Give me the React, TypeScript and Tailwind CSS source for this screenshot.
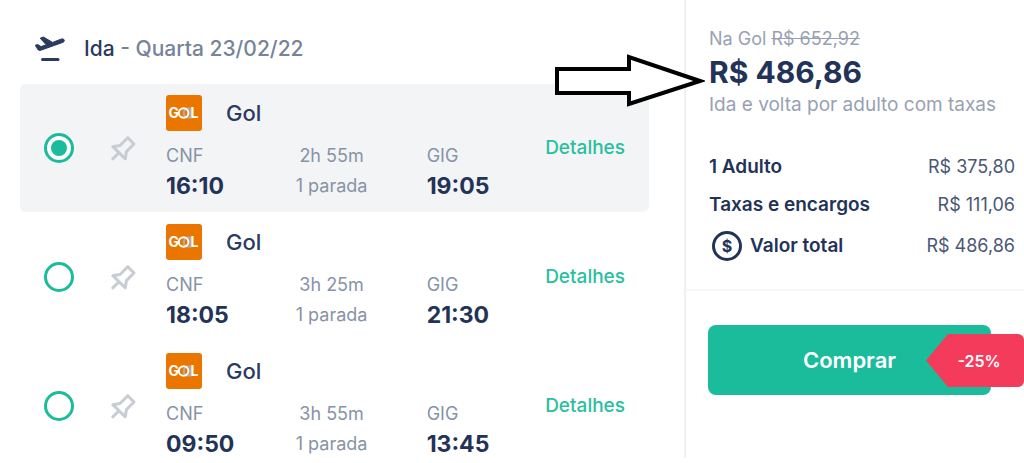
import React, { useState } from 'react';

interface Flight {
  id: string;
  departure: string;
  arrival: string;
  duration: string;
}

const flights: Flight[] = [
  { id: 'g1', departure: '16:10', arrival: '19:05', duration: '2h 55m' },
  { id: 'g2', departure: '18:05', arrival: '21:30', duration: '3h 25m' },
  { id: 'g3', departure: '09:50', arrival: '13:45', duration: '3h 55m' },
];

const TakeoffIcon = () => (
  <svg className="w-8 h-7 shrink-0" viewBox="0 0 32 28" fill="none" aria-hidden="true">
    <path
      d="M1.3 10.2 3.6 9.5 7 11.6 12.2 9.8 6.2 3.2 9.4 2 18.6 7.4 26.8 4.2C28.6 3.6 30 4 30.3 5.2 30.5 6.3 29.8 7 28.5 7.5L6.6 15.3C5.4 15.7 4.6 15.5 3.9 14.6Z"
      fill="#2b3a5f"
      stroke="#2b3a5f"
      strokeWidth="1"
      strokeLinejoin="round"
    />
    <path d="M8.5 24.5H24" stroke="#2b3a5f" strokeWidth="3" strokeLinecap="round" />
  </svg>
);

const PinIcon = () => (
  <svg className="w-[30px] h-[30px]" viewBox="0 0 30 30" fill="none" stroke="#c8cdd5" strokeWidth="3" strokeLinecap="round" strokeLinejoin="round" aria-hidden="true">
    <path d="M19.8 4.7 26 11 18.4 18.6 17.3 25.8 4.8 13.7 12 12.5Z" />
    <path d="M10.3 20.5 4.8 25.8" />
  </svg>
);

const GolLogo = () => (
  <svg className="w-9 h-9 shrink-0" viewBox="0 0 36 36" role="img" aria-label="Gol">
    <rect width="36" height="36" rx="3" fill="#ea7600" />
    <text x="2.6" y="23" fill="#fff" fontFamily="Inter, sans-serif" fontWeight="700" fontSize="14">G</text>
    <path d="M24.5 13.6H21Q17.8 14.6 17.8 18T21 22.6H24.5V14" fill="none" stroke="#b5aca6" strokeWidth="2" />
    <circle cx="17.6" cy="18" r="4.8" fill="none" stroke="#fff" strokeWidth="2" />
    <text x="24.6" y="23" fill="#fff" fontFamily="Inter, sans-serif" fontWeight="700" fontSize="14">L</text>
  </svg>
);

interface FlightRowProps {
  flight: Flight;
  selected: boolean;
  onSelect: (id: string) => void;
}

const FlightRow: React.FC<FlightRowProps> = ({ flight, selected, onSelect }) => {
  return (
    <li
      className={`
        flex items-center h-32 px-6 rounded-md
        ${selected ? 'bg-[#f3f4f6]' : 'bg-white'}
      `}
    >
      <input
        type="radio"
        name="flight"
        aria-label={`Gol ${flight.departure}`}
        checked={selected}
        onChange={() => onSelect(flight.id)}
        className="grid place-items-center shrink-0 w-[30px] h-[30px] appearance-none rounded-full border-[3px] border-[#1bbc9b] bg-white checked:before:content-[''] checked:before:w-4 checked:before:h-4 checked:before:rounded-full checked:before:bg-[#1bbc9b]"
      />
      <button type="button" aria-label="Fixar voo" className="ml-[34px] mr-7 shrink-0">
        <PinIcon />
      </button>

      <div className="flex-1 flex flex-col gap-2.5">
        <div className="flex items-center gap-6 h-9">
          <GolLogo />
          <span className="text-[22px] font-medium text-[#2b3a5f]">Gol</span>
        </div>
        <div className="grid grid-cols-[5fr_6fr_5fr] leading-[30px] text-lg text-[#8793a6]">
          <div>
            <div>CNF</div>
            <div className="text-[23px] leading-[30px] font-bold text-[#233358]">{flight.departure}</div>
          </div>
          <div className="text-center pr-12">
            <div>{flight.duration}</div>
            <div>1 parada</div>
          </div>
          <div>
            <div>GIG</div>
            <div className="text-[23px] leading-[30px] font-bold text-[#233358]">{flight.arrival}</div>
          </div>
        </div>
      </div>

      <a href="#detalhes" className="ml-auto text-[19px] font-medium text-[#2abf9e]">
        Detalhes
      </a>
    </li>
  );
};

const PriceSummary = () => {
  return (
    <aside className="relative self-start w-[340px] shrink-0 border-l-2 border-[#eef1f4]">
      {/* Arrow pointing at the price */}
      <svg className="absolute top-[54px] -left-[133px] w-[152px] h-[54px]" viewBox="0 0 152 54" aria-hidden="true">
        <path d="M4 15H76V3L147 27 76 50V39H4Z" fill="#fff" stroke="#000" strokeWidth="4" />
      </svg>

      <section className="pl-[23px] pr-[9px] pt-6 pb-[21px] border-b-2 border-[#f7f8f9]">
        <p className="text-lg leading-[30px] text-[#98a1b3]">
          Na Gol <s>R$ 652,92</s>
        </p>
        <p className="text-3xl leading-9 font-bold text-[#233358]">R$ 486,86</p>
        <p className="text-[19px] leading-[30px] text-[#98a1b3]">Ida e volta por adulto com taxas</p>

        <dl className="mt-7 text-lg text-[#4a5775]">
          <div className="flex items-center justify-between h-[38px]">
            <dt className="text-[19px] font-semibold text-[#233358]">1 Adulto</dt>
            <dd>R$ 375,80</dd>
          </div>
          <div className="flex items-center justify-between h-[38px]">
            <dt className="text-[19px] font-semibold text-[#233358]">Taxas e encargos</dt>
            <dd>R$ 111,06</dd>
          </div>
          <div className="flex items-center justify-between h-11">
            <dt className="flex items-center gap-2 pl-[3px] text-[19px] font-semibold text-[#233358]">
              <span className="grid place-items-center w-[30px] h-[30px] rounded-full border-[3px] text-base leading-none font-bold" aria-hidden="true">
                $
              </span>
              Valor total
            </dt>
            <dd>R$ 486,86</dd>
          </div>
        </dl>
      </section>

      <div className="pl-[22px] pr-[33px] pt-[34px] pb-[63px]">
        <div className="relative">
          <button type="button" className="w-full h-[70px] rounded-lg bg-[#1bbc9b] text-[22px] font-semibold text-white">
            Comprar
          </button>
          <span className="absolute -right-[33px] top-[9px] flex items-center justify-center w-[98px] h-[53px] pl-2 rounded-md bg-[#f43b5c] text-base font-semibold text-white [clip-path:polygon(22px_0,100%_0,100%_100%,22px_100%,0_50%)]">
            -25%
          </span>
        </div>
      </div>
    </aside>
  );
};

export default function App() {
  const [selectedId, setSelectedId] = useState('g1');

  return (
    <div className="flex bg-white font-['Inter',sans-serif]">
      <main className="flex-1 min-w-0 pl-5 pr-[35px] pt-[34px]">
        <h2 className="flex items-center gap-[18px] pl-[14px] h-[30px] mb-5 text-[21px] font-medium text-[#76839a]">
          <TakeoffIcon />
          <span>
            <span className="text-[#2b3a5f]">Ida</span> - Quarta 23/02/22
          </span>
        </h2>
        <ul className="flex flex-col gap-px">
          {flights.map((flight) => (
            <FlightRow
              key={flight.id}
              flight={flight}
              selected={flight.id === selectedId}
              onSelect={setSelectedId}
            />
          ))}
        </ul>
      </main>
      <PriceSummary />
    </div>
  );
}
